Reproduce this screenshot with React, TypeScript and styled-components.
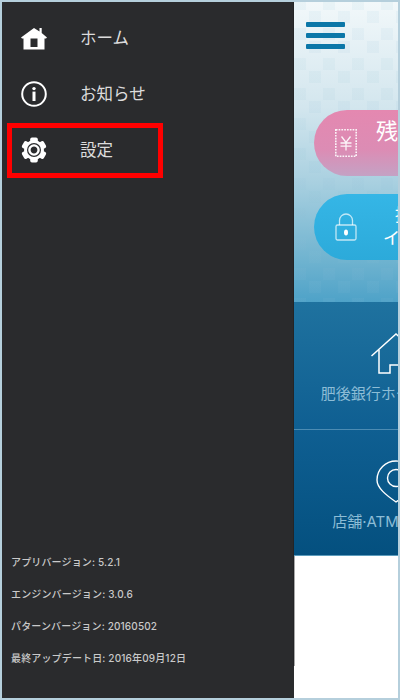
import React from "react";
import styled, { createGlobalStyle } from "styled-components";

const Global = createGlobalStyle`
  html, body { margin: 0; padding: 0; background: #fff; }
  body { font-family: Inter, "Noto Sans CJK JP", sans-serif; }
`;

const Frame = styled.div`
  width: 400px;
  height: 700px;
  box-sizing: border-box;
  border: 2px solid #b5cfdc;
  display: flex;
  overflow: hidden;
`;

const Drawer = styled.aside`
  position: relative;
  width: 292px;
  flex-shrink: 0;
  background: #2a2b2d;
  display: flex;
  flex-direction: column;
  justify-content: space-between;
  &::after {
    content: "";
    position: absolute;
    top: 0;
    right: 0;
    bottom: 32px;
    width: 1px;
    background: #232426;
  }
`;

const Menu = styled.nav`
  padding-top: 8px;
  display: flex;
  flex-direction: column;
`;

const MenuRow = styled.div<{ $marked?: boolean }>`
  position: relative;
  height: 56px;
  display: flex;
  align-items: center;
  gap: 19px;
  padding-left: 19px;
  color: #dcdcdc;
  font-size: 16.5px;
  &::after {
    content: "";
    display: ${(p) => (p.$marked ? "block" : "none")};
    position: absolute;
    left: 5px;
    top: 1px;
    width: 156px;
    height: 55px;
    box-sizing: border-box;
    border: 5px solid #f00;
  }
`;

const MenuLabel = styled.span`
  padding-bottom: 3px;
`;

const IconSlot = styled.span`
  width: 40px;
  height: 28px;
  flex-shrink: 0;
  display: flex;
  align-items: center;
  justify-content: flex-start;
  & > svg { display: block; }
`;

const Versions = styled.div`
  padding: 0 0 24px 9px;
  display: flex;
  flex-direction: column;
`;

const VersionLine = styled.div`
  height: 32px;
  line-height: 32px;
  font-size: 10px;
  font-weight: 500;
  letter-spacing: 0.15px;
  color: #c9c9c9;
  white-space: nowrap;
`;

const Main = styled.main`
  flex: 1;
  min-width: 0;
  overflow: hidden;
  display: flex;
  flex-direction: column;
  background: #fff;
`;

const TopArea = styled.section`
  height: 300px;
  flex-shrink: 0;
  box-sizing: border-box;
  padding: 20px 0 0 12px;
  display: flex;
  flex-direction: column;
  background:
    conic-gradient(from 270deg at 12px 12px, rgba(140, 190, 212, 0.09) 25%, transparent 0) 15px 9px / 29px 30px,
    conic-gradient(from 270deg at 12px 12px, rgba(140, 190, 212, 0.09) 25%, transparent 0) 0 26px / 29px 30px,
    linear-gradient(180deg, #f2f8fa 0%, #d3e6ee 35%, #a9d0e0 60%, #6db2cf 87%, #4ea2c8 100%);
`;

const Burger = styled.div`
  width: 39px;
  display: flex;
  flex-direction: column;
  gap: 6px;
`;

const BurgerBar = styled.span`
  height: 5px;
  border-radius: 1px;
  background: #0b77a8;
`;

const Pills = styled.div`
  margin: 61px 0 0 8px;
  display: flex;
  flex-direction: column;
  gap: 18px;
`;

const Pill = styled.div<{ $tone: "pink" | "blue" }>`
  width: 166px;
  height: 66px;
  flex-shrink: 0;
  box-sizing: border-box;
  padding-left: 21px;
  border-radius: 33px;
  display: flex;
  align-items: center;
  gap: 19px;
  color: #fff;
  background: ${(p) =>
    p.$tone === "pink"
      ? "linear-gradient(180deg, #e488b0 0%, #dc8cb4 60%, #c4a2c4 100%)"
      : "linear-gradient(180deg, #35b6e6 0%, #2caada 100%)"};
  & > svg { flex-shrink: 0; }
`;

const PillTitle = styled.span`
  font-size: 22px;
  line-height: 1;
  white-space: nowrap;
  margin-top: -24px;
`;

const PillLines = styled.div`
  display: flex;
  flex-direction: column;
  font-size: 17px;
  line-height: 23px;
  white-space: nowrap;
`;

const PillLine = styled.span<{ $indent: number }>`
  padding-left: ${(p) => p.$indent}px;
`;

const LinkArea = styled.section`
  height: 254px;
  flex-shrink: 0;
  display: flex;
  flex-direction: column;
  background: linear-gradient(180deg, #1f729f 0%, #0f5f92 50%, #04507f 100%);
  border-bottom: 1px solid #5c9cbc;
  box-sizing: border-box;
`;

const LinkCell = styled.div<{ $divided?: boolean }>`
  flex: 1;
  width: 203px;
  box-sizing: border-box;
  padding-top: ${(p) => (p.$divided ? 30 : 31)}px;
  display: flex;
  flex-direction: column;
  align-items: center;
  gap: 9px;
  & > svg { flex-shrink: 0; }
`;

const Divider = styled.div`
  height: 1px;
  width: 100%;
  flex-shrink: 0;
  background: rgba(150, 195, 220, 0.45);
`;

const LinkLabel = styled.span`
  font-size: 15px;
  line-height: 20px;
  color: #8dbdd6;
  white-space: nowrap;
`;

const BlankArea = styled.div`
  position: relative;
  flex: 1;
  &::before {
    content: "";
    position: absolute;
    left: 0;
    top: 0;
    width: 1px;
    height: 110px;
    background: #a8a8a8;
  }
`;

const HomeIcon = () => (
  <svg width="26" height="23" viewBox="0 0 26 23" fill="#fff">
    <path d="M13 1 L18.5 4.6 V1 H20.7 V6.1 L26 10.4 L25 11.6 H1 L0 10.4Z" />
    <path fillRule="evenodd" d="M2.5 11 H23.5 V22.5 H2.5Z M9.5 10 V20 H16.5 V10Z" />
    <path d="M8.8 10.2 H17.2 V11 H8.8Z" />
  </svg>
);

const InfoIcon = () => (
  <svg width="26" height="26" viewBox="0 0 26 26">
    <circle cx="13" cy="13" r="11.8" fill="none" stroke="#fff" strokeWidth="2" />
    <circle cx="13" cy="7.6" r="1.7" fill="#fff" />
    <rect x="11.5" y="10.6" width="3" height="9.4" fill="#fff" />
  </svg>
);

const GearIcon = () => (
  <svg width="26" height="26" viewBox="-13 -13 26 26">
    <circle r="10" fill="#fff" />
    {[0, 60, 120, 180, 240, 300].map((deg) => (
      <rect key={deg} x="-3.8" y="-12.6" width="7.6" height="6" rx="1.8" fill="#fff" transform={`rotate(${deg})`} />
    ))}
    <circle r="7" fill="#2a2b2d" />
    <circle r="4.6" fill="none" stroke="#fff" strokeWidth="2.4" />
  </svg>
);

const ReceiptIcon = () => (
  <svg width="22" height="28" viewBox="0 0 22 28" fill="none" stroke="#fff" strokeOpacity="0.9">
    <rect x="0.8" y="0.8" width="20.4" height="26.4" strokeWidth="1.6" strokeDasharray="1.7 1.1" />
    <path d="M6.5 7.5 L11 13.5 L15.5 7.5 M11 13.5 V21.5 M5.5 14 H16.5 M5.5 17.2 H16.5" strokeWidth="1.3" />
  </svg>
);

const LockIcon = () => (
  <svg width="22" height="28" viewBox="0 0 22 28" fill="none" stroke="#fff" strokeOpacity="0.7">
    <path d="M4.5 12 V7.5 A6.5 6.5 0 0 1 17.5 7.5 V12" strokeWidth="1.3" />
    <rect x="1" y="12" width="20" height="15" rx="1.5" strokeWidth="1.3" />
    <ellipse cx="11" cy="19.5" rx="2" ry="3" fill="#fff" stroke="none" />
  </svg>
);

const HouseOutline = () => (
  <svg width="50" height="42" viewBox="0 0 50 42" fill="none" stroke="#fff" strokeWidth="1.5">
    <path d="M0.5 23 L25 1 L49.5 23" />
    <path d="M8 17 V40 H19 V32 H31 V40 H42 V17" />
  </svg>
);

const PinOutline = () => (
  <svg width="40" height="43" viewBox="0 0 40 43" fill="none" stroke="#fff" strokeWidth="1.4">
    <path d="M20 42 C10 35 1 28 1 20 A19 19 0 0 1 39 20 C39 28 30 35 20 42Z" />
    <circle cx="20" cy="18" r="8.5" />
  </svg>
);

const versions = [
  "アプリバージョン: 5.2.1",
  "エンジンバージョン: 3.0.6",
  "パターンバージョン: 20160502",
  "最終アップデート日: 2016年09月12日",
];

export default function App() {
  return (
    <>
      <Global />
      <Frame>
        <Drawer>
          <Menu>
            <MenuRow>
              <IconSlot><HomeIcon /></IconSlot>
              <MenuLabel>ホーム</MenuLabel>
            </MenuRow>
            <MenuRow>
              <IconSlot><InfoIcon /></IconSlot>
              <MenuLabel>お知らせ</MenuLabel>
            </MenuRow>
            <MenuRow $marked>
              <IconSlot><GearIcon /></IconSlot>
              <MenuLabel>設定</MenuLabel>
            </MenuRow>
          </Menu>
          <Versions>
            {versions.map((v) => (
              <VersionLine key={v}>{v}</VersionLine>
            ))}
          </Versions>
        </Drawer>
        <Main>
          <TopArea>
            <Burger>
              <BurgerBar />
              <BurgerBar />
              <BurgerBar />
            </Burger>
            <Pills>
              <Pill $tone="pink">
                <ReceiptIcon />
                <PillTitle>残高照会</PillTitle>
              </Pill>
              <Pill $tone="blue">
                <LockIcon />
                <PillLines>
                  <PillLine $indent={19}>振込</PillLine>
                  <PillLine $indent={7}>インターネット</PillLine>
                </PillLines>
              </Pill>
            </Pills>
          </TopArea>
          <LinkArea>
            <LinkCell>
              <HouseOutline />
              <LinkLabel>肥後銀行ホームページ</LinkLabel>
            </LinkCell>
            <Divider />
            <LinkCell $divided>
              <PinOutline />
              <LinkLabel>店舗·ATM一覧表示</LinkLabel>
            </LinkCell>
          </LinkArea>
          <BlankArea />
        </Main>
      </Frame>
    </>
  );
}
